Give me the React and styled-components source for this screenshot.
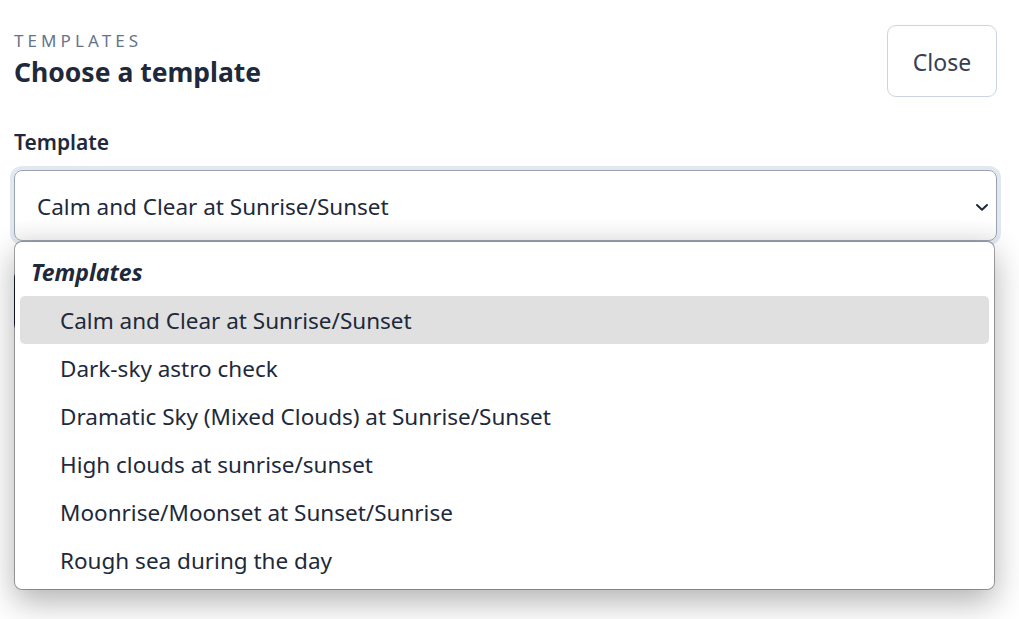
import React, { useState } from "react";
import styled, { createGlobalStyle } from "styled-components";

const GlobalStyle = createGlobalStyle`
  html, body {
    margin: 0;
    background: #ffffff;
    font-family: "Noto Sans", "Open Sans", sans-serif;
    color: #1e293b;
  }
`;

const templates = [
  "Calm and Clear at Sunrise/Sunset",
  "Dark-sky astro check",
  "Dramatic Sky (Mixed Clouds) at Sunrise/Sunset",
  "High clouds at sunrise/sunset",
  "Moonrise/Moonset at Sunset/Sunrise",
  "Rough sea during the day",
];

const App = () => {
  const [selected, setSelected] = useState(templates[0]);

  return (
    <Page>
      <GlobalStyle />
      <Header>
        <TitleBlock>
          <Eyebrow>Templates</Eyebrow>
          <Title>Choose a template</Title>
        </TitleBlock>
        <CloseButton>Close</CloseButton>
      </Header>

      <Label>Template</Label>
      <SelectWrap>
        <Select>
          <span>{selected}</span>
          <svg width="14" height="14" viewBox="0 0 14 14" fill="none">
            <path d="M2 5l5 4.8L12 5" stroke="#1e293b" strokeWidth="2" strokeLinecap="round" strokeLinejoin="round" />
          </svg>
        </Select>
        <Menu>
          <GroupLabel>Templates</GroupLabel>
          {templates.map((t) => (
            <Option key={t} $active={t === selected} onClick={() => setSelected(t)}>
              {t}
            </Option>
          ))}
        </Menu>
      </SelectWrap>

      <Actions>
        <ApplyButton aria-label="Apply template" />
      </Actions>
    </Page>
  );
};

const Page = styled.div`
  box-sizing: border-box;
  min-height: 100vh;
  padding: 25px 22px 0 14px;
`;

const Header = styled.div`
  display: flex;
  justify-content: space-between;
  align-items: flex-start;
`;

const TitleBlock = styled.div`
  padding-top: 6px;
`;

const Eyebrow = styled.div`
  font-size: 17px;
  line-height: 20px;
  letter-spacing: 0.24em;
  text-transform: uppercase;
  color: #64748b;
`;

const Title = styled.h1`
  margin: 4px 0 0;
  font-size: 26.5px;
  line-height: 34px;
  font-weight: 700;
  color: #1e293b;
`;

const CloseButton = styled.button`
  width: 110px;
  height: 72px;
  padding-top: 3px;
  border: 1px solid #cbd5e1;
  border-radius: 9px;
  background: #ffffff;
  font-family: inherit;
  font-size: 23px;
  color: #334155;
  cursor: pointer;
`;

const Label = styled.div`
  margin-top: 31px;
  font-size: 21px;
  line-height: 28px;
  font-weight: 600;
  color: #1e293b;
`;

const SelectWrap = styled.div`
  position: relative;
  margin-top: 14px;
`;

const Select = styled.div`
  box-sizing: border-box;
  height: 71px;
  display: flex;
  align-items: center;
  justify-content: space-between;
  padding: 2px 7px 0 22px;
  border: 1px solid #9ca3af;
  border-radius: 8px;
  background: linear-gradient(#ffffff 70%, #f6f6f6);
  box-shadow: 0 0 0 4px #e2e8f0;
  font-size: 22.5px;
  color: #1e293b;
`;

const Menu = styled.div`
  position: absolute;
  top: 100%;
  left: 0;
  right: 2px;
  z-index: 2;
  box-sizing: border-box;
  padding: 6px 5px 5px;
  background: #ffffff;
  background-clip: padding-box;
  border: 1px solid rgba(0, 0, 0, 0.33);
  border-radius: 8px;
  box-shadow: 0 12px 32px rgba(0, 0, 0, 0.3);
`;

const GroupLabel = styled.div`
  height: 48px;
  display: flex;
  align-items: center;
  padding-left: 11px;
  font-size: 23px;
  font-weight: 700;
  font-style: italic;
  color: #1e293b;
`;

const Option = styled.div`
  height: 48px;
  display: flex;
  align-items: center;
  padding-left: 40px;
  border-radius: 5px;
  font-size: 22.5px;
  color: #1e293b;
  background: ${(p) => (p.$active ? "#e0e0e0" : "transparent")};
  cursor: default;
`;

const Actions = styled.div`
  margin-top: 29px;
`;

const ApplyButton = styled.button`
  width: 220px;
  height: 62px;
  border: none;
  border-radius: 8px;
  background: #1e293b;
`;

export default App;
